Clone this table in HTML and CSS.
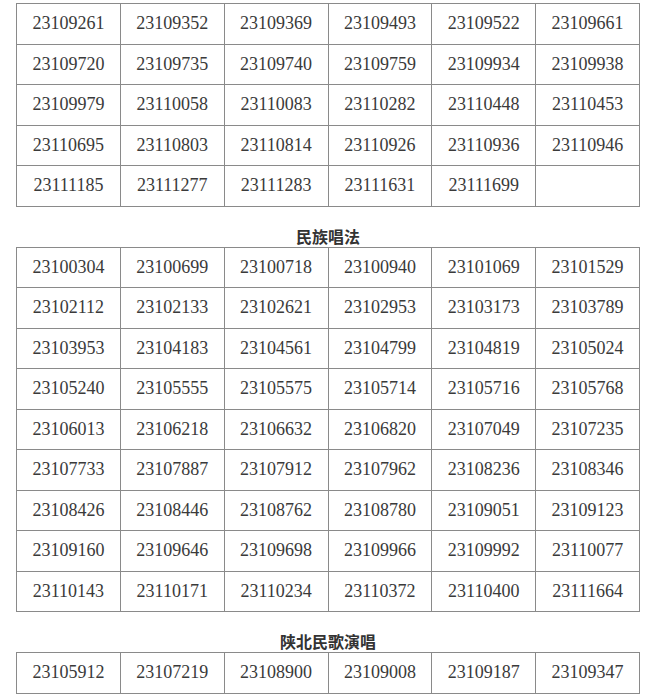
FILE: index.html
```html
<!DOCTYPE html>
<html lang="zh-CN">
<head>
<meta charset="utf-8">
<title>名单</title>
<link rel="stylesheet" href="styles.css">
</head>
<body>
<div class="sheet">
  <div class="grid">
    <div class="cell">23109261</div><div class="cell">23109352</div><div class="cell">23109369</div><div class="cell">23109493</div><div class="cell">23109522</div><div class="cell">23109661</div>
    <div class="cell">23109720</div><div class="cell">23109735</div><div class="cell">23109740</div><div class="cell">23109759</div><div class="cell">23109934</div><div class="cell">23109938</div>
    <div class="cell">23109979</div><div class="cell">23110058</div><div class="cell">23110083</div><div class="cell">23110282</div><div class="cell">23110448</div><div class="cell">23110453</div>
    <div class="cell">23110695</div><div class="cell">23110803</div><div class="cell">23110814</div><div class="cell">23110926</div><div class="cell">23110936</div><div class="cell">23110946</div>
    <div class="cell">23111185</div><div class="cell">23111277</div><div class="cell">23111283</div><div class="cell">23111631</div><div class="cell">23111699</div><div class="cell"></div>
  </div>
  <div class="title">民族唱法</div>
  <div class="grid">
    <div class="cell">23100304</div><div class="cell">23100699</div><div class="cell">23100718</div><div class="cell">23100940</div><div class="cell">23101069</div><div class="cell">23101529</div>
    <div class="cell">23102112</div><div class="cell">23102133</div><div class="cell">23102621</div><div class="cell">23102953</div><div class="cell">23103173</div><div class="cell">23103789</div>
    <div class="cell">23103953</div><div class="cell">23104183</div><div class="cell">23104561</div><div class="cell">23104799</div><div class="cell">23104819</div><div class="cell">23105024</div>
    <div class="cell">23105240</div><div class="cell">23105555</div><div class="cell">23105575</div><div class="cell">23105714</div><div class="cell">23105716</div><div class="cell">23105768</div>
    <div class="cell">23106013</div><div class="cell">23106218</div><div class="cell">23106632</div><div class="cell">23106820</div><div class="cell">23107049</div><div class="cell">23107235</div>
    <div class="cell">23107733</div><div class="cell">23107887</div><div class="cell">23107912</div><div class="cell">23107962</div><div class="cell">23108236</div><div class="cell">23108346</div>
    <div class="cell">23108426</div><div class="cell">23108446</div><div class="cell">23108762</div><div class="cell">23108780</div><div class="cell">23109051</div><div class="cell">23109123</div>
    <div class="cell">23109160</div><div class="cell">23109646</div><div class="cell">23109698</div><div class="cell">23109966</div><div class="cell">23109992</div><div class="cell">23110077</div>
    <div class="cell">23110143</div><div class="cell">23110171</div><div class="cell">23110234</div><div class="cell">23110372</div><div class="cell">23110400</div><div class="cell">23111664</div>
  </div>
  <div class="title">陕北民歌演唱</div>
  <div class="grid">
    <div class="cell">23105912</div><div class="cell">23107219</div><div class="cell">23108900</div><div class="cell">23109008</div><div class="cell">23109187</div><div class="cell">23109347</div>
  </div>
</div>
</body>
</html>
```

FILE: styles.css
```css
html, body {
  margin: 0;
  padding: 0;
  background: #ffffff;
}

.sheet {
  width: 624px;
  padding: 3px 0 0 16px;
}

.grid {
  display: grid;
  grid-template-columns: repeat(6, 1fr);
  grid-auto-rows: 40.5px;
  border-left: 1px solid #8a8a8a;
  border-top: 1px solid #8a8a8a;
}

.cell {
  display: flex;
  align-items: center;
  justify-content: center;
  border-right: 1px solid #8a8a8a;
  border-bottom: 1px solid #8a8a8a;
  font-family: "Liberation Serif", "Noto Sans CJK SC", serif;
  font-size: 18px;
  color: #3a3a3a;
}

.title {
  height: 40px;
  display: flex;
  align-items: flex-end;
  justify-content: center;
  padding-bottom: 1px;
  box-sizing: border-box;
  font-family: "Noto Sans CJK SC", sans-serif;
  font-weight: bold;
  font-size: 16px;
  line-height: 20px;
  color: #333333;
}
```
